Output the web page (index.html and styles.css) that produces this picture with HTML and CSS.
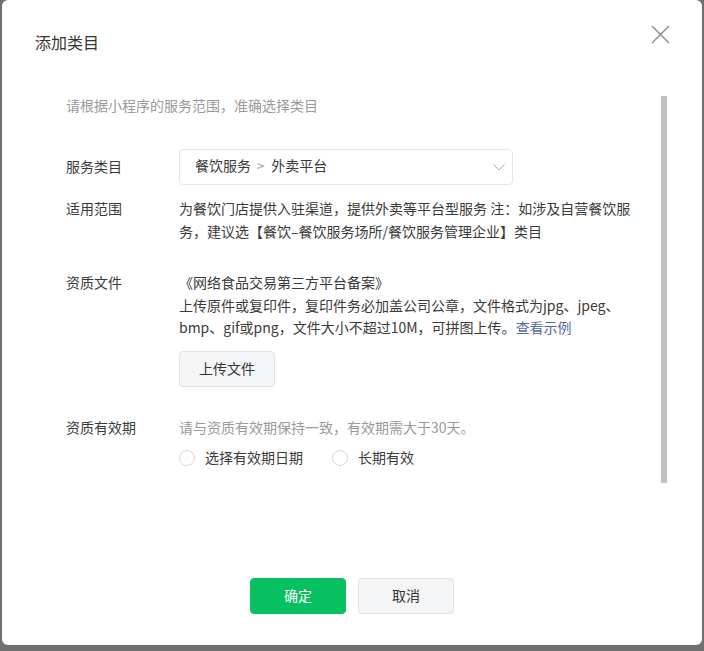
FILE: index.html
```html
<!DOCTYPE html>
<html lang="zh-CN">
<head>
<meta charset="utf-8">
<title>添加类目</title>
<link rel="stylesheet" href="styles.css">
</head>
<body>
<div class="modal">
  <div class="header">
    <h2 class="title">添加类目</h2>
    <button class="close" aria-label="关闭">
      <svg width="19" height="19" viewBox="0 0 19 19"><path d="M1 1L18 18M18 1L1 18" stroke="#8a8a8a" stroke-width="1.4" fill="none"/></svg>
    </button>
  </div>
  <div class="body">
    <div class="content">
      <p class="hint">请根据小程序的服务范围，准确选择类目</p>
      <div class="row row-select">
        <div class="label label-mid">服务类目</div>
        <div class="select">
          <span class="select-text">餐饮服务<span class="sep">&gt;</span>外卖平台</span>
          <svg class="chev" width="12" height="7" viewBox="0 0 12 7"><path d="M0.5 0.5L6 6L11.5 0.5" stroke="#a8a8a8" stroke-width="1" fill="none"/></svg>
        </div>
      </div>
      <div class="row row-scope">
        <div class="label">适用范围</div>
        <div class="value">为餐饮门店提供入驻渠道，提供外卖等平台型服务 注：如涉及自营餐饮服<br>务，建议选【餐饮–餐饮服务场所/餐饮服务管理企业】类目</div>
      </div>
      <div class="row row-file">
        <div class="label">资质文件</div>
        <div class="value">
          <div>《网络食品交易第三方平台备案》<br>上传原件或复印件，复印件务必加盖公司公章，文件格式为jpg、jpeg、<br>bmp、gif或png，文件大小不超过10M，可拼图上传。<a class="link" href="#">查看示例</a></div>
          <button class="btn-upload">上传文件</button>
        </div>
      </div>
      <div class="row row-date">
        <div class="label">资质有效期</div>
        <div class="value">
          <div class="muted">请与资质有效期保持一致，有效期需大于30天。</div>
          <div class="radios">
            <label class="radio"><span class="circle"></span>选择有效期日期</label>
            <label class="radio radio-2"><span class="circle"></span>长期有效</label>
          </div>
        </div>
      </div>
    </div>
    <div class="scrollbar"></div>
  </div>
  <div class="footer">
    <button class="btn btn-primary">确定</button>
    <button class="btn btn-default">取消</button>
  </div>
</div>
</body>
</html>
```
FILE: styles.css
```css
html, body {
  margin: 0;
  padding: 0;
  background: #707070;
  height: 100%;
}
body {
  font-family: "Noto Sans CJK SC", "Noto Sans", sans-serif;
  font-size: 14px;
  color: #3a3a3a;
}
.modal {
  margin-left: 2px;
  width: 700px;
  height: 645px;
  background: #fff;
  border-radius: 6px;
  display: flex;
  flex-direction: column;
}
.header {
  display: flex;
  justify-content: space-between;
  padding: 25px 32px 0 33px;
}
.title {
  margin: 5px 0 0;
  font-size: 16px;
  line-height: 24px;
  font-weight: normal;
  color: #353535;
}
.close {
  width: 19px;
  height: 19px;
  padding: 0;
  border: 0;
  background: none;
  display: block;
}
.close svg { display: block; }
.body {
  display: flex;
  margin-top: 40px;
}
.content {
  flex: 1;
  padding-left: 64px;
}
.scrollbar {
  width: 6px;
  height: 387px;
  background: #c1c1c1;
  margin: 2px 35px 0 0;
}
.hint {
  margin: 0 0 33px;
  line-height: 22px;
  color: #9a9a9a;
}
.row {
  display: grid;
  grid-template-columns: 113px 1fr;
  line-height: 22.5px;
}
.row-select { align-items: center; }
.label-mid { padding-bottom: 2px; }
.row-scope { margin-top: 12px; }
.row-file { margin-top: 29px; }
.row-date { margin-top: 29px; }
.label { color: #3a3a3a; }
.value { white-space: nowrap; }
.select {
  box-sizing: border-box;
  width: 334px;
  height: 36px;
  border: 1px solid #e6e6e6;
  border-radius: 4px;
  display: flex;
  align-items: center;
  justify-content: space-between;
  padding: 0 7px 0 15px;
}
.select-text { padding-bottom: 2px; }
.sep {
  color: #9a9a9a;
  margin: 0 7px 0 6px;
  font-size: 13px;
}
.chev { display: block; }
.link {
  color: #576b95;
  text-decoration: none;
}
.btn-upload {
  display: block;
  margin-top: 12px;
  width: 96px;
  height: 36px;
  background: #f4f5f7;
  border: 1px solid #e1e2e4;
  border-radius: 4px;
  font-family: inherit;
  font-size: 14px;
  color: #353535;
  padding: 0 0 2px;
}
.muted { color: #9a9a9a; }
.radios {
  display: flex;
  align-items: center;
  margin-top: 8px;
}
.radio {
  display: flex;
  align-items: center;
  gap: 10px;
}
.radio-2 { margin-left: 29px; }
.circle {
  box-sizing: border-box;
  width: 16px;
  height: 16px;
  border: 1px solid #d9d9d9;
  border-radius: 50%;
  margin-top: 2px;
}
.footer {
  margin-top: auto;
  display: flex;
  justify-content: center;
  gap: 12px;
  padding-bottom: 31px;
}
.btn {
  width: 96px;
  height: 36px;
  border-radius: 4px;
  font-family: inherit;
  font-size: 14px;
  padding: 0 0 2px;
}
.btn-primary {
  background: #07c160;
  border: 1px solid #07c160;
  color: #fff;
}
.btn-default {
  background: #f4f5f6;
  border: 1px solid #e1e2e4;
  color: #353535;
}
```
